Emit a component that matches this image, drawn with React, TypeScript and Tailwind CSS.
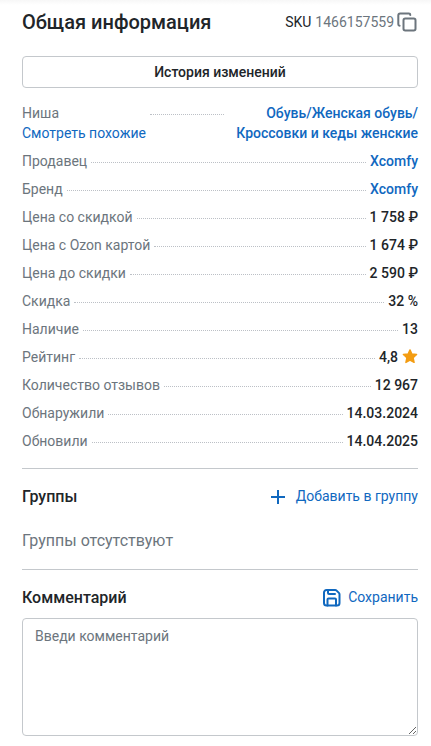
import { ReactNode, useState } from 'react'

type InfoRow = {
  label: string
  value: ReactNode
  href?: string
}

const rows: InfoRow[] = [
  { label: 'Продавец', value: 'Xcomfy', href: '#seller' },
  { label: 'Бренд', value: 'Xcomfy', href: '#brand' },
  { label: 'Цена со скидкой', value: '1 758 ₽' },
  { label: 'Цена с Ozon картой', value: '1 674 ₽' },
  { label: 'Цена до скидки', value: '2 590 ₽' },
  { label: 'Скидка', value: '32 %' },
  { label: 'Наличие', value: '13' },
  {
    label: 'Рейтинг',
    value: (
      <span className="flex items-center gap-1">
        4,8 <StarIcon />
      </span>
    ),
  },
  { label: 'Количество отзывов', value: '12 967' },
  { label: 'Обнаружили', value: '14.03.2024' },
  { label: 'Обновили', value: '14.04.2025' },
]

function StarIcon() {
  return (
    <svg width="16" height="16" viewBox="0 0 16 16" fill="#f39c12">
      <path
        d="M8 .9l1.900 4.100 4.700.5-3.500 3.200 1 4.700L8 11.100l-4.100 2.300 1-4.700L1.400 5.500l4.700-.5z"
        stroke="#f39c12"
        strokeWidth="1.400"
        strokeLinejoin="round"
      />
    </svg>
  )
}

function CopyIcon() {
  return (
    <svg
      width="24"
      height="24"
      viewBox="0 0 24 24"
      fill="none"
      stroke="currentColor"
      strokeWidth="2"
      strokeLinecap="round"
      strokeLinejoin="round">
      <rect x="9.500" y="8.500" width="12" height="12" rx="1.700" />
      <path d="M5.600 15.700c-.8 0-1.300-.6-1.300-1.400V5.500c0-1.100.8-1.900 1.900-1.900h8.700c.8 0 1.400.5 1.400 1.300" />
    </svg>
  )
}

function PlusIcon() {
  return (
    <svg width="16" height="16" viewBox="0 0 16 16" fill="none" stroke="currentColor" strokeWidth="2">
      <path d="M8 2v14M1 9h14" />
    </svg>
  )
}

function SaveIcon() {
  return (
    <svg
      width="18"
      height="20"
      viewBox="0 0 18 20"
      fill="none"
      stroke="currentColor"
      strokeWidth="2"
      strokeLinecap="round"
      strokeLinejoin="round">
      <path d="M3.500 3h8.700a2 2 0 0 1 1.400.6l2.300 2.300a2 2 0 0 1 .6 1.400v8.700a2.500 2.500 0 0 1-2.500 2.500H3.500A2.500 2.500 0 0 1 1 16V5.500A2.500 2.500 0 0 1 3.500 3z" />
      <path d="M4.500 18.500v-6a1 1 0 0 1 1-1H12a1 1 0 0 1 1 1v6M5 3v3a1 1 0 0 0 1 1h6" />
    </svg>
  )
}

const Dots = () => <span className="mt-[3px] flex-1 border-b border-dotted border-[#bcc0c6]" />

const App = () => {
  const [comment, setComment] = useState('')

  return (
    <main className="bg-white bg-linear-to-b from-[#f7f7f7] to-white to-[5px] pt-2 pr-[13px] pb-2 pl-[22px] font-[Roboto,sans-serif] text-sm text-[#212529]">
      <header className="flex items-center justify-between">
        <h1 className="text-xl font-medium">Общая информация</h1>
        <div className="flex items-center gap-1">
          <span>SKU</span>
          <span className="flex items-center text-[#6c757d]">
            1466157559
            <button type="button" aria-label="Скопировать SKU" className="cursor-pointer">
              <CopyIcon />
            </button>
          </span>
        </div>
      </header>

      <button
        type="button"
        className="mt-5 h-8 w-full cursor-pointer rounded border border-[#c4c8cc] font-medium">
        История изменений
      </button>

      <dl className="mt-[15px] space-y-2">
        <div className="flex gap-1">
          <dt className="text-[#6c757d]">
            Ниша
            <a href="#similar" className="block text-[#1068bf]">
              Смотреть похожие
            </a>
          </dt>
          <div className="flex h-5 flex-1 items-center">
            <Dots />
          </div>
          <dd className="w-[48%] text-right font-medium">
            <a href="#niche" className="text-[#1068bf]">
              Обувь/Женская обувь/
              <wbr />
              Кроссовки и кеды женские
            </a>
          </dd>
        </div>
        {rows.map(({ label, value, href }) => (
          <div key={label} className="flex items-center gap-1">
            <dt className="text-[#6c757d]">{label}</dt>
            <Dots />
            <dd className="font-medium">
              {href ? (
                <a href={href} className="text-[#1068bf]">
                  {value}
                </a>
              ) : (
                value
              )}
            </dd>
          </div>
        ))}
      </dl>

      <section className="mt-[17px] border-t border-[#c4c8cc] pt-4">
        <div className="flex items-start justify-between">
          <h2 className="text-base font-medium">Группы</h2>
          <button type="button" className="flex h-[22px] cursor-pointer items-center gap-[10px] text-[#1068bf]">
            <PlusIcon />
            Добавить в группу
          </button>
        </div>
        <p className="mt-5 text-base text-[#6c757d]">Группы отсутствуют</p>
      </section>

      <section className="mt-4 border-t border-[#c4c8cc] pt-4">
        <div className="flex items-start justify-between">
          <h2 className="text-base font-medium">
            <label htmlFor="comment">Комментарий</label>
          </h2>
          <button type="button" className="flex h-[22px] cursor-pointer items-center gap-[7px] text-[#1068bf]">
            <SaveIcon />
            Сохранить
          </button>
        </div>
        <textarea
          id="comment"
          value={comment}
          onChange={e => setComment(e.target.value)}
          placeholder="Введи комментарий"
          className="mt-2 block h-[118px] w-full rounded border border-[#c4c8cc] px-3 py-[7px] outline-none placeholder:text-[#6c757d]"
        />
      </section>
    </main>
  )
}

export default App
